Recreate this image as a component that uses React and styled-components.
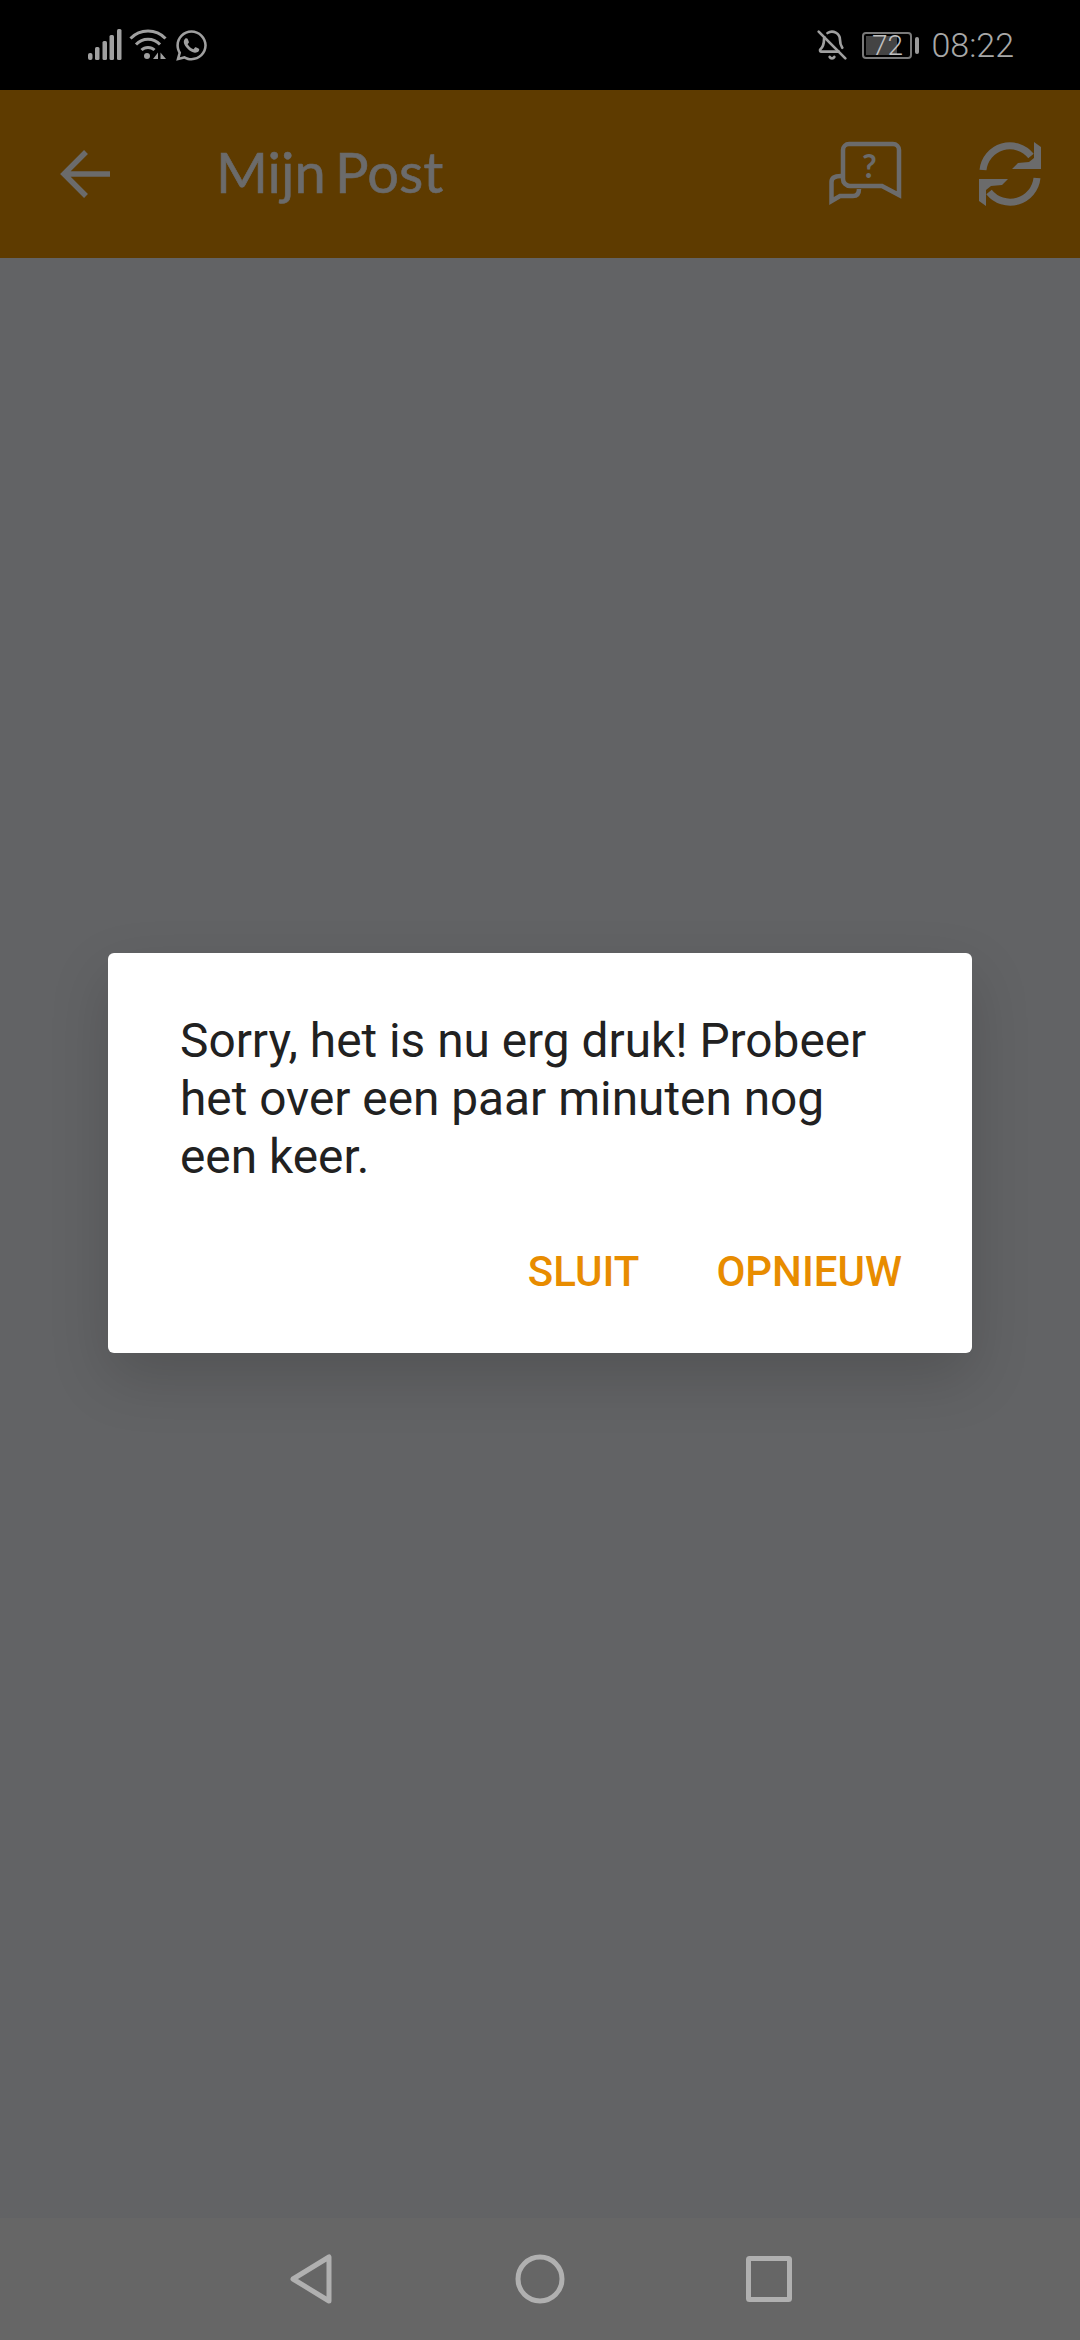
import React from "react";
import styled, { createGlobalStyle } from "styled-components";
import { FaWhatsapp } from "react-icons/fa";
import { BellOff } from "lucide-react";

const GlobalStyle = createGlobalStyle`
  html, body {
    margin: 0;
    padding: 0;
    background: #626365;
    font-family: "Roboto", "Liberation Sans", sans-serif;
  }
`;

const Screen = styled.div`
  width: 1080px;
  height: 2340px;
  display: flex;
  flex-direction: column;
  overflow: hidden;
`;

const StatusBar = styled.div`
  height: 90px;
  flex: none;
  background: #000;
  color: #a0a0a0;
  display: flex;
  align-items: center;
  justify-content: space-between;
  padding: 0 66px 0 88px;
`;

const StatusGroup = styled.div`
  display: flex;
  align-items: center;
  gap: ${({ $gap }) => $gap}px;
`;

const Battery = styled.div`
  position: relative;
  width: 50px;
  height: 27px;
  box-sizing: border-box;
  border: 2px solid #7a7a7a;
  border-radius: 4px;
  padding: 2px;
  display: flex;
  margin-left: 14px;
  margin-right: 9px;
  &::after {
    content: "";
    position: absolute;
    right: -9px;
    top: 3px;
    width: 4px;
    height: 17px;
    border-radius: 2px;
    background: #9a9a9a;
  }
`;

const BatteryFill = styled.div`
  height: 100%;
  background: #444;
`;

const BatteryLevel = styled.span`
  position: absolute;
  inset: 0;
  display: flex;
  align-items: center;
  justify-content: center;
  font-size: 28px;
  font-weight: 300;
  color: #c0c0c0;
`;

const Clock = styled.span`
  font-size: 34px;
  font-weight: 300;
  color: #a8a8a8;
  margin-left: 10px;
`;

const Header = styled.header`
  height: 168px;
  flex: none;
  background: #5e3b00;
  display: flex;
  align-items: center;
  color: #6b6b6b;
  padding: 0 39px 0 60px;
`;

const Title = styled.h1`
  margin: 0 0 0 106px;
  flex: 1;
  font-family: "Lato", "Noto Sans", sans-serif;
  font-size: 56px;
  font-weight: 400;
  word-spacing: -5px;
  -webkit-text-stroke: 0.6px #6b6b6b;
  position: relative;
  top: -3px;
`;

const HeaderIcons = styled.div`
  display: flex;
  align-items: center;
  gap: 77px;
`;

const Main = styled.main`
  flex: 1;
  background: #626365;
  padding: 695px 108px 0;
`;

const Dialog = styled.div`
  width: 864px;
  height: 400px;
  box-sizing: border-box;
  background: #fff;
  border-radius: 6px;
  box-shadow: 0 24px 60px rgba(0, 0, 0, 0.16);
  padding: 59px 70px 0 72px;
`;

const Message = styled.p`
  margin: 0;
  font-size: 47.8px;
  line-height: 58px;
  color: #212121;
`;

const Actions = styled.div`
  display: flex;
  justify-content: flex-end;
  gap: 77px;
  margin-top: 57px;
`;

const ActionButton = styled.button`
  border: 0;
  padding: 0;
  background: none;
  font-family: inherit;
  font-size: 42px;
  line-height: 57px;
  font-weight: 500;
  color: #e88c00;
`;

const NavBar = styled.nav`
  height: 122px;
  flex: none;
  background: #666;
  display: flex;
  align-items: center;
  justify-content: center;
  gap: 181px;
  padding-left: 2px;
  box-sizing: border-box;
`;

const SignalIcon = () => (
  <svg width="34" height="32" viewBox="0 0 34 32" fill="#a0a0a0">
    <rect x="0" y="24" width="4.5" height="7" rx="2" />
    <rect x="7" y="18" width="4.5" height="13" rx="1.5" />
    <rect x="14.500" y="12" width="4.5" height="19" rx="1.5" />
    <rect x="21.500" y="6" width="4.5" height="25" rx="1.5" />
    <rect x="29" y="0" width="4.5" height="31" rx="1.5" />
  </svg>
);

const WifiIcon = () => (
  <svg width="38" height="32" viewBox="0 0 38 32" fill="none" stroke="#a0a0a0" strokeWidth="3">
    <path d="M1.500 9.500C11 -0.500 27 -0.500 36.500 9.500" />
    <path d="M7 15.500C13.500 8.500 24.500 8.500 31 15.500" />
    <path d="M12.500 21C16 17.500 22 17.500 25.500 21" />
    <circle cx="18" cy="27" r="3" fill="#a0a0a0" stroke="none" />
    <path d="M29 23.500V30H24Z M31.500 23.500V30H37Z" fill="#a0a0a0" stroke="none" />
  </svg>
);

const BackArrow = () => (
  <svg width="50" height="48" viewBox="0 0 50 48" fill="none" stroke="#6b6b6b" strokeWidth="5.500">
    <path d="M50 24H4M26 2L4 24L26 46" />
  </svg>
);

const ChatIcon = () => (
  <svg width="74" height="66" viewBox="827 143 74 66" fill="none" stroke="#6b6b6b" strokeWidth="4.500">
    <path d="M898 197V152A6 6 0 0 0 892 146H848A6 6 0 0 0 842 152V181A7 7 0 0 0 849 188H881Z" />
    <path d="M840 178C833 178 830.500 180 830.500 184V203L839 198H852C856 198 858 196 858 191" />
    <text x="861" y="180" fontFamily="Lato, sans-serif" fontWeight="700" fontSize="32" fill="#6b6b6b" stroke="none">?</text>
  </svg>
);

const RefreshIcon = () => (
  <svg width="62" height="66" viewBox="978 140 62 66" fill="none" stroke="#6b6b6b" strokeWidth="7">
    <path d="M982 169A27 27 0 0 1 1030 155" />
    <path d="M1036 177A27 27 0 0 1 988 191" />
    <path d="M1033 141L1040 146V168H1011L1017 162L1028 161L1033 157Z" fill="#6b6b6b" stroke="none" />
    <path d="M985 205L978 200V178H1007L1001 184L990 185L985 189Z" fill="#6b6b6b" stroke="none" />
  </svg>
);

const NavBack = () => (
  <svg width="44" height="50" viewBox="0 0 44 50" fill="none" stroke="#b0b0b0" strokeWidth="5" strokeLinejoin="round">
    <path d="M39 3V47L3 25Z" />
  </svg>
);

const NavHome = () => (
  <svg width="50" height="50" viewBox="0 0 50 50" fill="none" stroke="#b0b0b0" strokeWidth="5">
    <circle cx="25" cy="25" r="22" />
  </svg>
);

const NavRecent = () => (
  <svg width="46" height="46" viewBox="0 0 46 46" fill="none" stroke="#b0b0b0" strokeWidth="5" strokeLinejoin="round">
    <rect x="2.500" y="2.500" width="41" height="41" rx="1" />
  </svg>
);

export default function App() {
  const battery = 72;
  return (
    <Screen>
      <GlobalStyle />
      <StatusBar>
        <StatusGroup $gap={7}>
          <SignalIcon />
          <WifiIcon />
          <FaWhatsapp size={35} color="#a0a0a0" />
        </StatusGroup>
        <StatusGroup $gap={0}>
          <BellOff size={32} color="#a0a0a0" strokeWidth={2} />
          <Battery>
            <BatteryFill style={{ width: `${battery}%` }} />
            <BatteryLevel>{battery}</BatteryLevel>
          </Battery>
          <Clock>08:22</Clock>
        </StatusGroup>
      </StatusBar>
      <Header>
        <BackArrow />
        <Title>Mijn Post</Title>
        <HeaderIcons>
          <ChatIcon />
          <RefreshIcon />
        </HeaderIcons>
      </Header>
      <Main>
        <Dialog>
          <Message>Sorry, het is nu erg druk! Probeer het over een paar minuten nog een keer.</Message>
          <Actions>
            <ActionButton>SLUIT</ActionButton>
            <ActionButton>OPNIEUW</ActionButton>
          </Actions>
        </Dialog>
      </Main>
      <NavBar>
        <NavBack />
        <NavHome />
        <NavRecent />
      </NavBar>
    </Screen>
  );
}
